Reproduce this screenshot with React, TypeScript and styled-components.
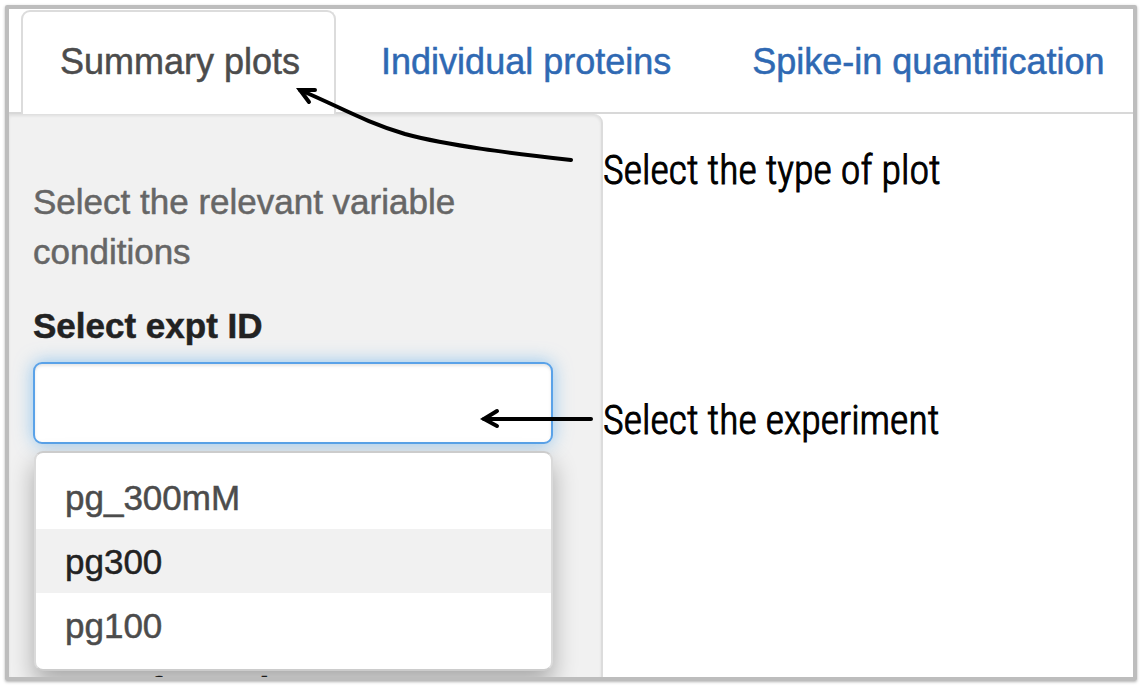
import React from 'react';
import styled, { createGlobalStyle } from 'styled-components';

const GlobalStyle = createGlobalStyle`
  *, *::before, *::after { box-sizing: border-box; }
  body {
    margin: 0;
    background: #fff;
    font-family: "Liberation Sans", Arial, sans-serif;
    font-size: 35px;
    line-height: 50px;
    color: #222;
  }
`;

const Frame = styled.div`
  display: flex;
  flex-direction: column;
  height: calc(100vh - 11px);
  margin: 5px 5px 6px;
  overflow: hidden;
  border: 4px solid #bdbdbd;
  border-radius: 2px;
  box-shadow: 0 1px 3px rgba(0, 0, 0, 0.3);
`;

const Tabs = styled.nav`
  display: flex;
  flex: none;
  gap: 6px;
  height: 105px;
  padding: 1px 0 0 12px;
  border-bottom: 2px solid #d8d8d8;
  font-size: 36px;
`;

const Tab = styled.a<{ $active?: boolean }>`
  height: ${(p) => (p.$active ? '104px' : '102px')};
  padding: 25px 34px 0 37px;
  border: 2px solid ${(p) => (p.$active ? '#dcdcdc' : 'transparent')};
  border-bottom: 0;
  border-radius: 9px 9px 0 0;
  background: #fff;
  color: ${(p) => (p.$active ? '#4c4c4c' : '#2f69b3')};
  text-decoration: none;
  white-space: nowrap;
  -webkit-text-stroke: 0.5px currentColor;
`;

const Content = styled.main`
  position: relative;
  display: flex;
  flex: 1;
  min-height: 0;
`;

const Sidebar = styled.form`
  flex: none;
  width: 594px;
  padding: 63px 48px 0 24px;
  border-right: 2px solid #dcdcdc;
  border-radius: 0 9px 0 0;
  background: #f1f1f1;
  box-shadow: inset 0 2px 3px rgba(0, 0, 0, 0.08);
`;

const Help = styled.p`
  margin: 0 0 24px;
  color: #666;
  -webkit-text-stroke: 0.5px currentColor;
`;

const Label = styled.label`
  display: block;
  font-weight: bold;
  -webkit-text-stroke: 0.5px currentColor;
`;

const Picker = styled.div`
  position: relative;
  margin-top: 11px;
`;

const Field = styled.input`
  display: block;
  width: 100%;
  height: 82px;
  padding: 0 28px;
  border: 2px solid #5aa2e8;
  border-radius: 9px;
  outline: 0;
  background: #fff;
  font: inherit;
  box-shadow: inset 0 2px 3px rgba(0, 0, 0, 0.1), 0 0 18px rgba(82, 168, 236, 0.6);
`;

const Menu = styled.ul`
  position: absolute;
  top: 89px;
  left: 1px;
  right: 0;
  margin: 0;
  padding: 12px 0;
  list-style: none;
  border: 2px solid #ccc;
  border-color: #ccc #dadada #ccc #dadada;
  border-radius: 9px;
  background: #fff;
  box-shadow: 0 12px 24px rgba(0, 0, 0, 0.3);
`;

const Option = styled.li<{ $active?: boolean }>`
  padding: 8px 29px 6px;
  background: ${(p) => (p.$active ? '#f1f1f1' : '#fff')};
  color: ${(p) => (p.$active ? '#222' : '#4c4c4c')};
  -webkit-text-stroke: 0.5px currentColor;
`;

const NextLabel = styled(Label)`
  margin: 221px 0 0 32px;
`;

const Notes = styled.aside`
  flex: 1;
  display: flex;
  flex-direction: column;
  gap: 200px;
  padding-top: 32px;
  color: #000;
  font-family: "Roboto Condensed", Roboto, sans-serif;
  font-size: 40px;
  font-weight: 300;
  white-space: nowrap;
  -webkit-text-stroke: 1px currentColor;
`;

const Note = styled.p`
  margin: 0;
`;

const Arrows = styled.svg`
  position: absolute;
  top: -34px;
  left: 280px;
  width: 310px;
  height: 360px;
  fill: none;
  stroke: #000;
  stroke-width: 4;
  stroke-linecap: round;
  pointer-events: none;
`;

const options = ['pg_300mM', 'pg300', 'pg100'];

export default function App() {
  return (
    <>
      <GlobalStyle />
      <Frame>
        <Tabs>
          <Tab href="#summary" $active>Summary plots</Tab>
          <Tab href="#proteins">Individual proteins</Tab>
          <Tab href="#spike-in">Spike-in quantification</Tab>
        </Tabs>
        <Content>
          <Sidebar>
            <Help>Select the relevant variable conditions</Help>
            <Label htmlFor="expt">Select expt ID</Label>
            <Picker>
              <Field id="expt" type="text" autoComplete="off" />
              <Menu>
                {options.map((name) => (
                  <Option key={name} $active={name === 'pg300'}>{name}</Option>
                ))}
              </Menu>
            </Picker>
            <NextLabel as="div">transformation</NextLabel>
          </Sidebar>
          <Notes>
            <Note>Select the type of plot</Note>
            <Note>Select the experiment</Note>
          </Notes>
          <Arrows viewBox="289 80 310 360" aria-hidden="true">
            <path d="M300 90 C340 107 365 122 405 134 C450 146 510 153 571 160" />
            <path d="M315 90 L300 90 L309 102" />
            <path d="M484 419 H591" />
            <path d="M497 411 L484 419 L497 426" />
          </Arrows>
        </Content>
      </Frame>
    </>
  );
}
